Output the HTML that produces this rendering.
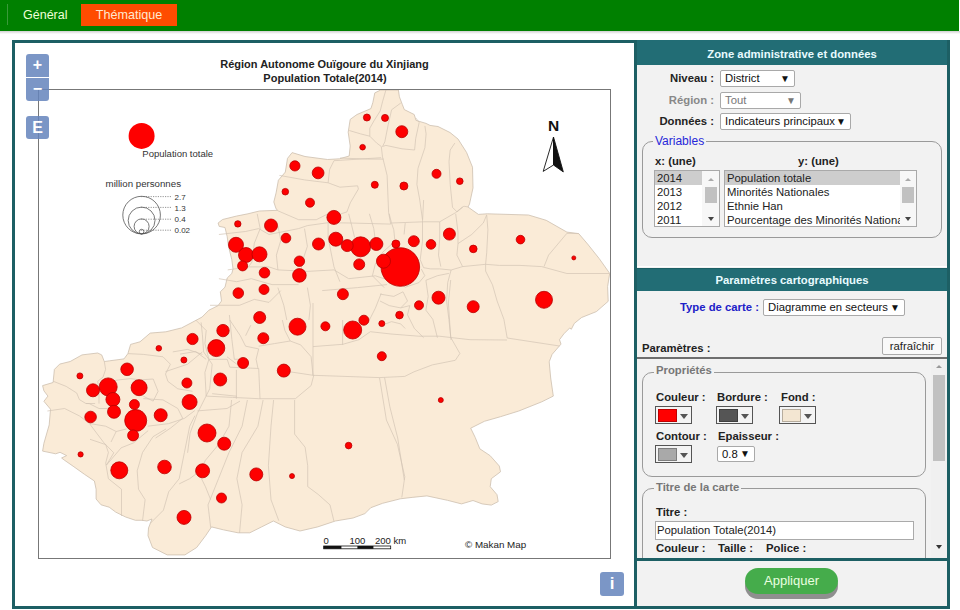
<!DOCTYPE html>
<html><head><meta charset="utf-8">
<style>
*{box-sizing:border-box}
html,body{margin:0;padding:0;width:960px;height:610px;overflow:hidden;background:#fff;font-family:"Liberation Sans",sans-serif;font-size:11.3px;color:#222}
.a{position:absolute}
#topbar{left:0;top:0;width:959px;height:31px;background:#008000}
#topsh{left:0;top:31px;width:960px;height:3px;background:linear-gradient(#d0d0d0,#fff)}
#sep{left:7px;top:4px;width:1px;height:21px;background:#3a9a3a}
#t1{left:23px;top:8px;font-size:12.5px;color:#efffd8}
#t2{left:81px;top:4px;width:96px;height:22px;background:#ff4c00;color:#ffe8d0;font-size:12.6px;text-align:center;line-height:22px}
#frame{left:12px;top:40px;width:938px;height:569px;border:3px solid #1d5f64}
#zplus,#zminus,#ze,#zi{background:rgba(100,132,188,0.85);color:#fff;font-weight:bold;text-align:center;border-radius:3px}
#zplus{left:26px;top:54px;width:23px;height:23px;font-size:16px;line-height:22px;border-radius:3px 3px 0 0}
#zminus{left:26px;top:78px;width:23px;height:23px;font-size:16px;line-height:21px;border-radius:0 0 3px 3px}
#ze{left:26px;top:116px;width:23px;height:23px;font-size:16px;line-height:23px}
#zi{left:600px;top:572px;width:24px;height:24px;font-size:17px;line-height:24px}
#mapbox{left:38px;top:89px;width:573px;height:470px;border:1px solid #777}
#panel{left:634px;top:40px;width:316px;height:569px;background:#f2f2f2;border:3px solid #1d5f64}
.hdr{background:#226d75;color:#e8fbff;font-weight:bold;text-align:center}
.lbl{font-weight:bold;color:#222;white-space:nowrap}
.sel{background:#fff;border:1px solid #a9a9a9;border-radius:2px;padding-left:4px;line-height:15px;color:#111;white-space:nowrap;overflow:hidden}
.sel i{position:absolute;right:4px;top:0;font-style:normal;font-size:10px}
.fs{border:1px solid #9a9a9a;border-radius:10px}
.leg{background:#f2f2f2;padding:0 2px;white-space:nowrap}
.lst{background:#fff;border:1px solid #a9a9a9;overflow:hidden}
.lst div{height:14px;line-height:14px;padding-left:2px;white-space:nowrap}
.sb{background:#f0f0f0}
.up,.dn{position:absolute;left:0;width:100%;text-align:center;font-size:7px;color:#777}
.tu{position:absolute;width:0;height:0;border-left:3.5px solid transparent;border-right:3.5px solid transparent;border-bottom:3.5px solid #aaa}
.td{position:absolute;width:0;height:0;border-left:3.5px solid transparent;border-right:3.5px solid transparent;border-top:4px solid #444}
.cp{background:#f4f4f4;border:1px solid #555}
.cp b{position:absolute;left:2px;top:2px;width:19px;height:13px;border:1px solid rgba(0,0,0,0.25)}
.cp i{position:absolute;left:24px;top:7px;width:0;height:0;border-left:4.5px solid transparent;border-right:4.5px solid transparent;border-top:5px solid #555}
</style></head>
<body>
<div id="topbar" class="a"></div>
<div id="topsh" class="a"></div>
<div id="sep" class="a"></div>
<div id="t1" class="a">Général</div>
<div id="t2" class="a">Thématique</div>
<div id="frame" class="a"></div>
<div id="mapbox" class="a"></div>
<svg class="a" style="left:0;top:0" width="960" height="610" viewBox="0 0 960 610">
<defs><clipPath id="mc"><rect x="39" y="90" width="571" height="468"/></clipPath></defs>
<g clip-path="url(#mc)">
<polygon points="374.8,92.9 380.7,90.0 398.4,90.0 399.4,96.8 402.4,104.7 404.3,109.6 414.2,114.5 416.0,120.4 426.0,123.4 430.0,125.4 438.0,126.5 450.0,132.5 458.0,139.0 466.6,152.5 472.5,167.2 473.0,187.9 469.5,204.1 468.0,207.0 478.4,214.4 487.2,213.8 528.5,215.0 546.2,220.3 566.9,232.1 578.7,233.6 587.5,243.9 599.3,258.7 609.7,273.4 607.6,286.6 608.2,301.3 596.4,311.6 581.6,317.5 574.3,323.4 571.3,329.3 569.8,327.9 563.9,333.8 559.5,339.7 561.0,344.1 552.1,354.4 549.2,361.8 550.7,378.0 553.3,396.1 541.8,401.8 518.8,411.0 500.5,416.7 484.4,421.3 470.7,428.2 475.2,437.4 479.8,448.8 490.2,455.7 499.3,466.0 500.5,471.8 491.3,478.7 490.2,486.7 497.0,494.7 498.2,501.6 491.3,505.1 482.1,503.9 473.0,500.5 461.5,503.9 447.5,500.3 426.9,495.9 412.1,497.4 400.3,498.8 382.6,503.3 370.8,507.7 364.9,513.6 353.1,518.0 335.4,521.0 317.7,526.9 300.0,531.0 285.2,526.9 273.4,521.0 261.6,526.9 249.8,532.8 238.0,532.8 223.3,529.8 211.5,526.9 205.6,535.7 196.7,547.5 184.9,554.9 167.2,554.9 152.5,547.5 148.0,535.7 148.5,528.0 152.0,519.0 146.9,521.0 142.0,520.3 135.4,520.3 125.6,517.0 115.7,512.1 109.2,507.2 101.0,504.8 96.1,499.0 96.1,489.2 94.4,481.0 84.6,474.4 73.1,466.2 64.9,460.5 61.6,458.0 66.6,455.6 60.0,452.3 55.7,453.8 42.6,451.1 43.9,443.3 49.2,424.9 50.5,409.2 43.9,401.3 47.9,396.1 43.9,390.8 42.6,385.6 53.1,382.5 54.4,369.4 59.7,364.1 70.2,361.5 82.0,354.9 97.7,353.0 101.7,354.9 104.3,361.5 109.6,360.8 124.0,358.9 127.9,353.6 130.6,344.4 140.0,341.8 150.2,333.1 165.9,331.8 181.6,327.9 190.0,323.5 202.0,317.1 208.9,310.2 218.1,305.6 221.5,301.0 220.3,291.8 225.0,287.2 227.2,278.0 231.8,273.5 233.0,268.9 231.8,259.7 228.4,245.9 227.2,236.7 225.0,227.5 219.2,226.4 218.1,223.0 222.6,219.5 236.4,216.1 247.9,213.8 259.4,211.0 277.7,210.3 276.1,208.9 273.8,202.0 276.1,192.8 278.4,180.2 285.3,172.1 287.5,158.4 292.1,152.6 305.0,156.5 327.6,159.5 339.4,158.8 349.2,156.0 350.2,146.0 348.2,132.2 350.2,119.4 357.0,114.5 370.9,108.6 372.8,102.7" fill="#faebd7" stroke="#cdbfae" stroke-width="0.8"/>
<polyline points="385.9,90.0 382.5,101.8 380.2,111.0 374.4,120.1 369.8,128.2 369.8,136.2 376.7,143.1 381.3,146.5 382.5,156.9 384.8,166.0 387.1,175.4 388.6,212.3 390.7,224.1" fill="none" stroke="#d2c4b4" stroke-width="0.7"/>
<polyline points="349.2,130.5 360.7,133.9 369.8,136.2" fill="none" stroke="#d2c4b4" stroke-width="0.7"/>
<polyline points="400.8,103.0 391.6,109.8 388.2,124.7 384.8,141.9 382.5,146.5" fill="none" stroke="#d2c4b4" stroke-width="0.7"/>
<polyline points="415.7,117.8 419.2,122.4 415.7,138.5 414.6,150.0 402.0,148.8 385.9,145.4 382.5,146.5" fill="none" stroke="#d2c4b4" stroke-width="0.7"/>
<polyline points="424.9,125.9 426.1,133.9 424.9,147.7 418.0,168.3 416.9,184.4 419.6,199.0 422.5,219.7" fill="none" stroke="#d2c4b4" stroke-width="0.7"/>
<polyline points="454.8,143.1 450.2,150.0 449.0,161.4 450.2,184.4 452.5,207.3 457.0,211.9 463.9,206.2 468.0,207.0" fill="none" stroke="#d2c4b4" stroke-width="0.7"/>
<polyline points="340.0,158.0 367.5,159.1 383.6,159.1" fill="none" stroke="#d2c4b4" stroke-width="0.7"/>
<polyline points="334.0,160.7 381.2,157.7" fill="none" stroke="#d2c4b4" stroke-width="0.7"/>
<polyline points="334.0,160.7 329.6,169.5 328.1,182.8" fill="none" stroke="#d2c4b4" stroke-width="0.7"/>
<polyline points="279.4,175.4 304.5,179.9 328.1,182.8 339.9,187.2 357.6,185.8" fill="none" stroke="#d2c4b4" stroke-width="0.7"/>
<polyline points="277.9,210.8 298.6,219.7 316.3,219.7 328.1,213.8 340.0,214.2 346.9,211.9 350.3,202.8 358.4,189.0 357.6,185.8" fill="none" stroke="#d2c4b4" stroke-width="0.7"/>
<polyline points="389.2,213.8 391.5,223.0 423.6,221.8 439.7,221.8 455.7,212.6 462.6,206.9" fill="none" stroke="#d2c4b4" stroke-width="0.7"/>
<polyline points="455.7,213.8 458.0,232.1 458.0,243.6 456.9,255.1 462.6,266.6" fill="none" stroke="#d2c4b4" stroke-width="0.7"/>
<polyline points="218.9,234.5 245.4,231.5 258.7,228.6 269.0,234.5 298.6,228.6 307.4,225.6 328.1,222.7 350.0,223.0 390.7,224.1" fill="none" stroke="#d2c4b4" stroke-width="0.7"/>
<polyline points="257.2,213.8 260.2,228.6 254.3,243.3 252.0,262.0 248.4,266.9" fill="none" stroke="#d2c4b4" stroke-width="0.7"/>
<polyline points="277.9,225.6 280.8,240.4 276.4,255.1 277.9,269.9" fill="none" stroke="#d2c4b4" stroke-width="0.7"/>
<polyline points="304.5,228.6 307.4,246.3 301.5,264.0 301.5,281.7" fill="none" stroke="#d2c4b4" stroke-width="0.7"/>
<polyline points="328.1,222.7 328.1,237.4 331.0,252.2 334.0,266.9 339.9,281.7" fill="none" stroke="#d2c4b4" stroke-width="0.7"/>
<polyline points="348.7,213.8 351.7,225.6 354.6,237.4" fill="none" stroke="#d2c4b4" stroke-width="0.7"/>
<polyline points="369.4,213.8 373.8,228.6 375.3,240.4" fill="none" stroke="#d2c4b4" stroke-width="0.7"/>
<polyline points="391.5,223.0 393.8,229.8 394.9,241.3 382.7,252.2 375.3,264.0 372.4,275.8 384.2,287.6" fill="none" stroke="#d2c4b4" stroke-width="0.7"/>
<polyline points="405.2,223.0 404.1,234.4" fill="none" stroke="#d2c4b4" stroke-width="0.7"/>
<polyline points="277.9,269.9 307.4,271.4 334.0,269.9 348.7,278.7 375.3,275.8 401.9,284.6 405.2,287.2 419.0,282.6 424.8,275.7 421.3,268.9" fill="none" stroke="#d2c4b4" stroke-width="0.7"/>
<polyline points="423.6,267.7 430.5,268.9 439.7,268.9 451.1,270.0 462.6,266.6 485.6,264.3 499.3,265.4 520.0,265.4" fill="none" stroke="#d2c4b4" stroke-width="0.7"/>
<polyline points="425.9,280.3 437.4,275.7 448.9,273.4" fill="none" stroke="#d2c4b4" stroke-width="0.7"/>
<polyline points="425.9,280.3 428.2,296.4 425.9,310.2 432.8,319.3 437.4,337.7" fill="none" stroke="#d2c4b4" stroke-width="0.7"/>
<polyline points="380.0,294.1 393.8,296.4 403.0,291.8" fill="none" stroke="#d2c4b4" stroke-width="0.7"/>
<polyline points="380.0,301.0 389.2,305.6 400.7,307.9 409.8,305.6 407.5,314.8 414.4,328.5 423.6,337.7" fill="none" stroke="#d2c4b4" stroke-width="0.7"/>
<polyline points="380.0,326.2 391.5,321.6 400.7,323.9 405.2,328.5" fill="none" stroke="#d2c4b4" stroke-width="0.7"/>
<polyline points="403.0,291.8 407.5,301.0 400.7,307.9" fill="none" stroke="#d2c4b4" stroke-width="0.7"/>
<polyline points="227.7,269.9 248.4,266.9 269.0,266.9 277.9,269.9" fill="none" stroke="#d2c4b4" stroke-width="0.7"/>
<polyline points="218.9,278.7 236.6,281.7 251.3,278.7 272.0,284.6 298.6,284.6" fill="none" stroke="#d2c4b4" stroke-width="0.7"/>
<polyline points="210.0,305.3 239.5,305.3 254.3,299.4 269.0,302.4 280.8,290.6" fill="none" stroke="#d2c4b4" stroke-width="0.7"/>
<polyline points="277.9,287.6 283.8,305.3 286.8,320.0" fill="none" stroke="#d2c4b4" stroke-width="0.7"/>
<polyline points="307.4,287.6 310.4,305.3 308.9,320.0" fill="none" stroke="#d2c4b4" stroke-width="0.7"/>
<polyline points="322.2,290.6 357.6,287.6 387.1,284.6" fill="none" stroke="#d2c4b4" stroke-width="0.7"/>
<polyline points="381.2,293.5 375.3,308.3 369.4,320.0" fill="none" stroke="#d2c4b4" stroke-width="0.7"/>
<polyline points="423.6,200.0 422.5,221.8 422.5,241.3 420.2,259.7 423.6,267.7" fill="none" stroke="#d2c4b4" stroke-width="0.7"/>
<polyline points="439.7,221.8 439.7,239.0 438.5,255.1 440.8,266.6" fill="none" stroke="#d2c4b4" stroke-width="0.7"/>
<polyline points="458.0,243.6 471.8,234.4 483.3,223.0 486.7,214.9" fill="none" stroke="#d2c4b4" stroke-width="0.7"/>
<polyline points="486.7,214.9 487.9,229.8 486.7,252.8 485.6,264.3" fill="none" stroke="#d2c4b4" stroke-width="0.7"/>
<polyline points="520.0,265.4 541.7,266.6 566.9,273.5 609.7,273.5" fill="none" stroke="#d2c4b4" stroke-width="0.7"/>
<polyline points="578.7,233.6 566.9,233.3 548.6,255.1 544.0,266.6" fill="none" stroke="#d2c4b4" stroke-width="0.7"/>
<polyline points="485.6,264.3 485.6,271.1 492.5,284.9 497.1,301.0 503.9,319.3 507.2,338.0 559.5,346.0" fill="none" stroke="#d2c4b4" stroke-width="0.7"/>
<polyline points="451.1,270.0 447.7,282.6 446.6,301.0 448.9,319.3 451.1,340.0" fill="none" stroke="#d2c4b4" stroke-width="0.7"/>
<polyline points="450.7,280.0 448.4,303.0 450.7,337.4 459.9,353.5 455.3,360.3 432.3,364.9 414.0,371.8 404.8,376.4 379.5,377.6 313.0,375.3 290.0,371.8" fill="none" stroke="#d2c4b4" stroke-width="0.7"/>
<polyline points="313.0,346.6 342.8,344.3 358.9,339.7 370.3,331.7 391.0,334.0 418.6,336.2 439.2,336.2 470.0,339.7 507.0,340.0" fill="none" stroke="#d2c4b4" stroke-width="0.7"/>
<polyline points="313.0,303.0 313.0,375.3" fill="none" stroke="#d2c4b4" stroke-width="0.7"/>
<polyline points="379.5,377.6 386.4,420.0 397.4,444.3 404.8,476.7 401.8,497.4" fill="none" stroke="#d2c4b4" stroke-width="0.7"/>
<polyline points="85.9,403.5 89.2,403.6 99.0,408.5 113.8,408.5 121.2,413.4" fill="none" stroke="#d2c4b4" stroke-width="0.7"/>
<polyline points="47.4,411.0 64.6,408.5 79.4,415.9 89.2,423.2 96.6,433.1 104.0,442.9 113.8,452.8 106.4,465.1" fill="none" stroke="#d2c4b4" stroke-width="0.7"/>
<polyline points="104.3,361.5 105.6,369.4 103.0,377.2 97.7,381.2 99.0,392.0 99.0,403.6" fill="none" stroke="#d2c4b4" stroke-width="0.7"/>
<polyline points="53.1,381.2 66.2,386.4 76.7,393.0 79.4,399.6 85.9,403.5 95.1,403.5" fill="none" stroke="#d2c4b4" stroke-width="0.7"/>
<polyline points="127.9,353.6 143.3,354.4 163.0,356.8 170.4,364.2 165.5,374.0 167.9,381.4 177.8,388.8 192.5,391.3" fill="none" stroke="#d2c4b4" stroke-width="0.7"/>
<polyline points="165.5,371.6 187.6,364.2 202.4,351.9" fill="none" stroke="#d2c4b4" stroke-width="0.7"/>
<polyline points="201.1,322.4 202.4,334.7 203.6,351.9 212.2,364.2 209.7,388.8 197.4,413.4 190.1,433.1 187.6,452.8" fill="none" stroke="#d2c4b4" stroke-width="0.7"/>
<polyline points="112.0,381.0 118.7,379.9 130.6,378.6 140.0,379.9 153.2,379.0 158.1,391.3 153.2,401.1 143.3,396.2" fill="none" stroke="#d2c4b4" stroke-width="0.7"/>
<polyline points="143.3,398.6 163.0,399.9 177.8,408.5 182.7,418.3 170.4,428.2 155.6,438.0" fill="none" stroke="#d2c4b4" stroke-width="0.7"/>
<polyline points="148.2,430.6 133.5,442.9 121.2,447.8 106.4,465.1" fill="none" stroke="#d2c4b4" stroke-width="0.7"/>
<polyline points="229.4,315.0 231.9,339.6 234.3,359.3 240.0,359.3" fill="none" stroke="#d2c4b4" stroke-width="0.7"/>
<polyline points="197.4,410.9 227.0,408.5 240.0,401.1" fill="none" stroke="#d2c4b4" stroke-width="0.7"/>
<polyline points="212.2,393.7 236.8,396.2" fill="none" stroke="#d2c4b4" stroke-width="0.7"/>
<polyline points="227.0,356.8 236.8,364.2" fill="none" stroke="#d2c4b4" stroke-width="0.7"/>
<polyline points="172.8,351.9 187.6,349.4 202.4,354.4" fill="none" stroke="#d2c4b4" stroke-width="0.7"/>
<polyline points="90.0,439.3 105.7,444.6 108.4,452.5 105.7,463.0 108.4,478.7 121.5,489.2 121.5,516.0" fill="none" stroke="#d2c4b4" stroke-width="0.7"/>
<polyline points="116.2,431.5 111.0,442.0" fill="none" stroke="#d2c4b4" stroke-width="0.7"/>
<polyline points="166.1,428.9 153.0,436.7 142.5,452.5 137.2,470.8 138.5,489.2 145.1,499.7 142.5,521.0" fill="none" stroke="#d2c4b4" stroke-width="0.7"/>
<polyline points="194.9,415.7 189.7,426.2 184.4,452.5 179.2,478.7 168.7,491.8 163.4,510.2 150.3,523.3" fill="none" stroke="#d2c4b4" stroke-width="0.7"/>
<polyline points="231.6,400.0 229.0,426.2 218.5,444.6 205.4,460.3 200.2,470.8 189.7,478.7 179.2,483.9" fill="none" stroke="#d2c4b4" stroke-width="0.7"/>
<polyline points="247.4,400.0 242.1,426.2 229.0,452.5 218.5,478.7 208.0,504.9 210.7,527.5" fill="none" stroke="#d2c4b4" stroke-width="0.7"/>
<polyline points="200.2,476.1 205.4,486.6 210.7,499.7" fill="none" stroke="#d2c4b4" stroke-width="0.7"/>
<polyline points="263.1,400.0 257.9,426.2 242.1,452.5 236.9,478.7 242.1,504.9 239.5,533.0" fill="none" stroke="#d2c4b4" stroke-width="0.7"/>
<polyline points="273.6,400.0 271.0,426.2 268.4,465.6 271.0,499.7 278.8,520.7" fill="none" stroke="#d2c4b4" stroke-width="0.7"/>
<polyline points="294.6,400.0 294.6,434.1 305.1,447.2 307.7,465.6 307.7,486.6 318.2,494.4 330.0,504.9 333.9,521.0" fill="none" stroke="#d2c4b4" stroke-width="0.7"/>
<polyline points="90.0,423.6 105.7,426.2 116.2,431.5 126.7,428.9" fill="none" stroke="#d2c4b4" stroke-width="0.7"/>
<polyline points="147.7,426.2 168.7,423.6 184.4,418.4 194.9,410.5" fill="none" stroke="#d2c4b4" stroke-width="0.7"/>
<polyline points="206.2,396.1 232.5,397.4 258.7,398.7 295.4,398.7 311.1,385.6 313.8,375.1" fill="none" stroke="#d2c4b4" stroke-width="0.7"/>
<polyline points="206.2,396.1 204.9,372.5 208.9,359.3 227.2,359.3 229.8,367.2 258.7,368.5 260.0,398.7" fill="none" stroke="#d2c4b4" stroke-width="0.7"/>
<polyline points="236.4,369.8 236.4,398.7" fill="none" stroke="#d2c4b4" stroke-width="0.7"/>
<polyline points="258.7,348.9 256.1,359.3 258.0,368.5" fill="none" stroke="#d2c4b4" stroke-width="0.7"/>
<polyline points="258.7,346.2 274.4,343.6 290.2,341.0 300.7,344.9 311.1,356.7 313.0,375.1" fill="none" stroke="#d2c4b4" stroke-width="0.7"/>
<polyline points="384.6,377.7 389.8,406.6 397.7,438.0 404.3,480.0" fill="none" stroke="#d2c4b4" stroke-width="0.7"/>
<polyline points="195.7,320.0 206.2,330.5 204.9,343.6 208.9,359.3" fill="none" stroke="#d2c4b4" stroke-width="0.7"/>
<polyline points="229.8,320.0 240.3,335.7 245.6,346.2 258.7,348.9" fill="none" stroke="#d2c4b4" stroke-width="0.7"/>
<polyline points="180.0,354.1 195.7,351.5 206.2,359.3" fill="none" stroke="#d2c4b4" stroke-width="0.7"/>
<polyline points="250.8,325.2 245.6,335.7" fill="none" stroke="#d2c4b4" stroke-width="0.7"/>
<polyline points="282.3,320.0 284.9,330.5 290.2,341.0" fill="none" stroke="#d2c4b4" stroke-width="0.7"/>
<polyline points="342.6,320.0 342.6,344.9" fill="none" stroke="#d2c4b4" stroke-width="0.7"/>
<circle cx="400.3" cy="267" r="19.3" fill="#fe0000" stroke="#b80000" stroke-width="0.8"/>
<circle cx="135.7" cy="420.5" r="11" fill="#fe0000" stroke="#b80000" stroke-width="0.8"/>
<circle cx="360.6" cy="246.8" r="10" fill="#fe0000" stroke="#b80000" stroke-width="0.8"/>
<circle cx="352.7" cy="330" r="9" fill="#fe0000" stroke="#b80000" stroke-width="0.8"/>
<circle cx="108.2" cy="386.9" r="9" fill="#fe0000" stroke="#b80000" stroke-width="0.8"/>
<circle cx="207" cy="433" r="9" fill="#fe0000" stroke="#b80000" stroke-width="0.8"/>
<circle cx="544" cy="299.8" r="8.5" fill="#fe0000" stroke="#b80000" stroke-width="0.8"/>
<circle cx="297.5" cy="326.7" r="8.5" fill="#fe0000" stroke="#b80000" stroke-width="0.8"/>
<circle cx="216.3" cy="348.1" r="8.5" fill="#fe0000" stroke="#b80000" stroke-width="0.8"/>
<circle cx="119.3" cy="470.3" r="8.5" fill="#fe0000" stroke="#b80000" stroke-width="0.8"/>
<circle cx="139.1" cy="387.7" r="8" fill="#fe0000" stroke="#b80000" stroke-width="0.8"/>
<circle cx="236" cy="244.8" r="7.5" fill="#fe0000" stroke="#b80000" stroke-width="0.8"/>
<circle cx="246" cy="255" r="7.5" fill="#fe0000" stroke="#b80000" stroke-width="0.8"/>
<circle cx="259.5" cy="254.3" r="7.5" fill="#fe0000" stroke="#b80000" stroke-width="0.8"/>
<circle cx="189.6" cy="402" r="7.5" fill="#fe0000" stroke="#b80000" stroke-width="0.8"/>
<circle cx="333.9" cy="217.4" r="7" fill="#fe0000" stroke="#b80000" stroke-width="0.8"/>
<circle cx="335.8" cy="239.2" r="7" fill="#fe0000" stroke="#b80000" stroke-width="0.8"/>
<circle cx="383.5" cy="261.2" r="7" fill="#fe0000" stroke="#b80000" stroke-width="0.8"/>
<circle cx="112.9" cy="399.5" r="7" fill="#fe0000" stroke="#b80000" stroke-width="0.8"/>
<circle cx="202.6" cy="470.8" r="7" fill="#fe0000" stroke="#b80000" stroke-width="0.8"/>
<circle cx="184" cy="517.4" r="7" fill="#fe0000" stroke="#b80000" stroke-width="0.8"/>
<circle cx="299.4" cy="275.4" r="6.8" fill="#fe0000" stroke="#b80000" stroke-width="0.8"/>
<circle cx="164.5" cy="467" r="6.8" fill="#fe0000" stroke="#b80000" stroke-width="0.8"/>
<circle cx="438.5" cy="297.7" r="6.5" fill="#fe0000" stroke="#b80000" stroke-width="0.8"/>
<circle cx="271" cy="225.5" r="6.5" fill="#fe0000" stroke="#b80000" stroke-width="0.8"/>
<circle cx="376.4" cy="244" r="6.5" fill="#fe0000" stroke="#b80000" stroke-width="0.8"/>
<circle cx="283.8" cy="370.6" r="6.5" fill="#fe0000" stroke="#b80000" stroke-width="0.8"/>
<circle cx="220.2" cy="379.5" r="6.5" fill="#fe0000" stroke="#b80000" stroke-width="0.8"/>
<circle cx="93" cy="390.3" r="6.5" fill="#fe0000" stroke="#b80000" stroke-width="0.8"/>
<circle cx="114" cy="411.8" r="6.5" fill="#fe0000" stroke="#b80000" stroke-width="0.8"/>
<circle cx="160.7" cy="415.2" r="6.5" fill="#fe0000" stroke="#b80000" stroke-width="0.8"/>
<circle cx="224.2" cy="443.7" r="6.5" fill="#fe0000" stroke="#b80000" stroke-width="0.8"/>
<circle cx="256.3" cy="474.4" r="6.5" fill="#fe0000" stroke="#b80000" stroke-width="0.8"/>
<circle cx="127.1" cy="369.3" r="6.3" fill="#fe0000" stroke="#b80000" stroke-width="0.8"/>
<circle cx="223" cy="330.6" r="6.2" fill="#fe0000" stroke="#b80000" stroke-width="0.8"/>
<circle cx="401.8" cy="131.7" r="6" fill="#fe0000" stroke="#b80000" stroke-width="0.8"/>
<circle cx="449.4" cy="234.1" r="6" fill="#fe0000" stroke="#b80000" stroke-width="0.8"/>
<circle cx="473.2" cy="306.7" r="6" fill="#fe0000" stroke="#b80000" stroke-width="0.8"/>
<circle cx="318.5" cy="244" r="6" fill="#fe0000" stroke="#b80000" stroke-width="0.8"/>
<circle cx="347.2" cy="245.6" r="6" fill="#fe0000" stroke="#b80000" stroke-width="0.8"/>
<circle cx="259.7" cy="317.5" r="6" fill="#fe0000" stroke="#b80000" stroke-width="0.8"/>
<circle cx="318.1" cy="172.9" r="5.9" fill="#fe0000" stroke="#b80000" stroke-width="0.8"/>
<circle cx="90.6" cy="417" r="5.8" fill="#fe0000" stroke="#b80000" stroke-width="0.8"/>
<circle cx="192.5" cy="339" r="5.6" fill="#fe0000" stroke="#b80000" stroke-width="0.8"/>
<circle cx="413.8" cy="241.2" r="5.5" fill="#fe0000" stroke="#b80000" stroke-width="0.8"/>
<circle cx="359.2" cy="264.4" r="5.5" fill="#fe0000" stroke="#b80000" stroke-width="0.8"/>
<circle cx="342.9" cy="294.2" r="5.5" fill="#fe0000" stroke="#b80000" stroke-width="0.8"/>
<circle cx="263.3" cy="338.2" r="5.5" fill="#fe0000" stroke="#b80000" stroke-width="0.8"/>
<circle cx="243.1" cy="363" r="5.5" fill="#fe0000" stroke="#b80000" stroke-width="0.8"/>
<circle cx="133.1" cy="435.4" r="5.5" fill="#fe0000" stroke="#b80000" stroke-width="0.8"/>
<circle cx="264.5" cy="272.7" r="5.3" fill="#fe0000" stroke="#b80000" stroke-width="0.8"/>
<circle cx="238.3" cy="293.1" r="5.3" fill="#fe0000" stroke="#b80000" stroke-width="0.8"/>
<circle cx="299.4" cy="261.2" r="5.2" fill="#fe0000" stroke="#b80000" stroke-width="0.8"/>
<circle cx="294.9" cy="165.9" r="5.1" fill="#fe0000" stroke="#b80000" stroke-width="0.8"/>
<circle cx="242.6" cy="265.9" r="5" fill="#fe0000" stroke="#b80000" stroke-width="0.8"/>
<circle cx="264" cy="289.5" r="5" fill="#fe0000" stroke="#b80000" stroke-width="0.8"/>
<circle cx="363.9" cy="320.2" r="5" fill="#fe0000" stroke="#b80000" stroke-width="0.8"/>
<circle cx="186.9" cy="383" r="5" fill="#fe0000" stroke="#b80000" stroke-width="0.8"/>
<circle cx="134.4" cy="404.5" r="5" fill="#fe0000" stroke="#b80000" stroke-width="0.8"/>
<circle cx="221.5" cy="498" r="5" fill="#fe0000" stroke="#b80000" stroke-width="0.8"/>
<circle cx="431" cy="244.4" r="4.8" fill="#fe0000" stroke="#b80000" stroke-width="0.8"/>
<circle cx="286" cy="238.1" r="4.8" fill="#fe0000" stroke="#b80000" stroke-width="0.8"/>
<circle cx="310" cy="202.7" r="4.5" fill="#fe0000" stroke="#b80000" stroke-width="0.8"/>
<circle cx="436.5" cy="173.8" r="4.5" fill="#fe0000" stroke="#b80000" stroke-width="0.8"/>
<circle cx="325.4" cy="326.3" r="4.5" fill="#fe0000" stroke="#b80000" stroke-width="0.8"/>
<circle cx="419" cy="305.3" r="4.5" fill="#fe0000" stroke="#b80000" stroke-width="0.8"/>
<circle cx="381.8" cy="356.2" r="4.5" fill="#fe0000" stroke="#b80000" stroke-width="0.8"/>
<circle cx="520.5" cy="239.6" r="4.3" fill="#fe0000" stroke="#b80000" stroke-width="0.8"/>
<circle cx="403.9" cy="186" r="4" fill="#fe0000" stroke="#b80000" stroke-width="0.8"/>
<circle cx="395.9" cy="244" r="4" fill="#fe0000" stroke="#b80000" stroke-width="0.8"/>
<circle cx="473.3" cy="248.9" r="3.8" fill="#fe0000" stroke="#b80000" stroke-width="0.8"/>
<circle cx="399.5" cy="315.1" r="3.8" fill="#fe0000" stroke="#b80000" stroke-width="0.8"/>
<circle cx="366.9" cy="117.5" r="3.5" fill="#fe0000" stroke="#b80000" stroke-width="0.8"/>
<circle cx="385" cy="117.9" r="3.5" fill="#fe0000" stroke="#b80000" stroke-width="0.8"/>
<circle cx="374.8" cy="184.8" r="3.5" fill="#fe0000" stroke="#b80000" stroke-width="0.8"/>
<circle cx="285.3" cy="191.7" r="3.3" fill="#fe0000" stroke="#b80000" stroke-width="0.8"/>
<circle cx="459.8" cy="181.2" r="3.3" fill="#fe0000" stroke="#b80000" stroke-width="0.8"/>
<circle cx="348.6" cy="445.6" r="3.3" fill="#fe0000" stroke="#b80000" stroke-width="0.8"/>
<circle cx="237.8" cy="223.9" r="3.2" fill="#fe0000" stroke="#b80000" stroke-width="0.8"/>
<circle cx="381.8" cy="323.6" r="3" fill="#fe0000" stroke="#b80000" stroke-width="0.8"/>
<circle cx="183.9" cy="360" r="3" fill="#fe0000" stroke="#b80000" stroke-width="0.8"/>
<circle cx="79.9" cy="375.9" r="3" fill="#fe0000" stroke="#b80000" stroke-width="0.8"/>
<circle cx="362.6" cy="147.2" r="2.8" fill="#fe0000" stroke="#b80000" stroke-width="0.8"/>
<circle cx="158.8" cy="348.3" r="2.8" fill="#fe0000" stroke="#b80000" stroke-width="0.8"/>
<circle cx="80.6" cy="454.4" r="2.6" fill="#fe0000" stroke="#b80000" stroke-width="0.8"/>
<circle cx="440.8" cy="400.1" r="2.5" fill="#fe0000" stroke="#b80000" stroke-width="0.8"/>
<circle cx="292" cy="476.1" r="2.5" fill="#fe0000" stroke="#b80000" stroke-width="0.8"/>
<circle cx="573.8" cy="257.9" r="2" fill="#fe0000" stroke="#b80000" stroke-width="0.8"/>
</g>

<g font-family="Liberation Sans" fill="#222">
<text x="324.5" y="68.3" font-size="11" font-weight="bold" text-anchor="middle">Région Autonome Ouïgoure du Xinjiang</text>
<text x="325" y="82.3" font-size="11" font-weight="bold" text-anchor="middle">Population Totale(2014)</text>
<circle cx="141.6" cy="135.9" r="13" fill="#fe0000"/>
<text x="142.3" y="156.8" font-size="9.5" fill="#333">Population totale</text>
<text x="105.6" y="186.8" font-size="9.7" fill="#333">million personnes</text>
<g fill="none" stroke="#555" stroke-width="0.8">
<circle cx="141.6" cy="215.1" r="18.8"/><circle cx="141.6" cy="220.5" r="13.4"/><circle cx="141.6" cy="226.4" r="7.5"/><circle cx="141.6" cy="231.6" r="2.3"/>
</g>
<g stroke="#666" stroke-width="0.7" stroke-dasharray="1.2,1.2">
<line x1="141" y1="196.6" x2="171" y2="196.6"/><line x1="141" y1="207.4" x2="171" y2="207.4"/><line x1="141" y1="219.2" x2="171" y2="219.2"/><line x1="141" y1="230.2" x2="171" y2="230.2"/>
</g>
<g font-size="8" fill="#333"><text x="174.5" y="199.8">2.7</text><text x="174.5" y="210.6">1.3</text><text x="174.5" y="222.4">0.4</text><text x="174.5" y="233.4">0.02</text></g>
<text x="548" y="131.2" font-size="15.5" font-weight="bold" fill="#111">N</text>
<polygon points="553.5,137 543.2,171.4 553.5,165" fill="#fff" stroke="#111" stroke-width="0.9"/>
<polygon points="553.5,137 563.3,171.9 553.5,165" fill="#111" stroke="#111" stroke-width="0.9"/>
<g font-size="9.5" fill="#222"><text x="323.5" y="544.2">0</text><text x="349.4" y="544.2">100</text><text x="375" y="544.2">200 km</text></g>
<rect x="323.7" y="546" width="67" height="2.8" fill="#fff" stroke="#111" stroke-width="0.8"/>
<rect x="323.7" y="546" width="17.7" height="2.8" fill="#111"/><rect x="357.4" y="546" width="16" height="2.8" fill="#111"/>
<text x="465" y="547.9" font-size="9.8" fill="#222">© Makan Map</text>
</g>
</svg>
<div id="zplus" class="a">+</div>
<div id="zminus" class="a">&minus;</div>
<div id="ze" class="a">E</div>
<div id="zi" class="a">i</div>
<div id="panel" class="a"></div>
<!-- section 1 -->
<div class="a hdr" style="left:637px;top:40px;width:310px;height:25px;line-height:29px">Zone administrative et données</div>
<div class="a lbl" style="left:640px;top:72px;width:74px;text-align:right">Niveau :</div>
<div class="a sel" style="left:720px;top:70px;width:75px;height:17px">District<i>&#9660;</i></div>
<div class="a lbl" style="left:640px;top:94px;width:74px;text-align:right;color:#888">Région :</div>
<div class="a sel" style="left:720px;top:92px;width:81px;height:17px;color:#777">Tout<i style="color:#777">&#9660;</i></div>
<div class="a lbl" style="left:640px;top:115px;width:74px;text-align:right">Données :</div>
<div class="a sel" style="left:720px;top:113px;width:131px;height:17px">Indicateurs principaux<i>&#9660;</i></div>
<div class="a fs" style="left:642px;top:141px;width:300px;height:97px"></div>
<div class="a leg" style="left:653px;top:134px;color:#2626d9;font-size:12px">Variables</div>
<div class="a lbl" style="left:655px;top:155px">x: (une)</div>
<div class="a lbl" style="left:798px;top:155px">y: (une)</div>
<div class="a lst" style="left:654px;top:170px;width:66px;height:57px">
 <div style="background:#cdcdcd;width:47px">2014</div><div>2013</div><div>2012</div><div>2011</div>
 <div class="a" style="left:47px;top:0;width:17px;height:55px;background:#f7f7f7"><i class="tu" style="left:6px;top:7px"></i><div class="a" style="left:3px;top:16px;width:12px;height:15.5px;background:#c1c1c1"></div><i class="td" style="left:6px;top:45.5px"></i></div>
</div>
<div class="a lst" style="left:724px;top:170px;width:193px;height:57px">
 <div style="background:#cdcdcd;width:175px">Population totale</div><div>Minorités Nationales</div><div>Ethnie Han</div><div>Pourcentage des Minorités Nationales</div>
 <div class="a" style="left:175px;top:0;width:16px;height:55px;background:#f7f7f7"><i class="tu" style="left:4.5px;top:7px"></i><div class="a" style="left:2px;top:16px;width:12px;height:15.5px;background:#c1c1c1"></div><i class="td" style="left:4.5px;top:45.5px"></i></div>
</div>
<div class="a" style="left:637px;top:266px;width:310px;height:1px;background:#fff"></div>
<!-- section 2 -->
<div class="a hdr" style="left:637px;top:268px;width:310px;height:22.5px;line-height:23px;border-top:1px solid #1d5f64">Paramètres cartographiques</div>
<div class="a lbl" style="left:680px;top:301px;color:#2020c8">Type de carte :</div>
<div class="a sel" style="left:763px;top:299px;width:142px;height:17px">Diagramme en secteurs<i>&#9660;</i></div>
<div class="a lbl" style="left:642px;top:342px">Paramètres :</div>
<div class="a" style="left:882px;top:336.5px;width:60px;height:18px;background:#f9f9f9;border:1px solid #aaa;border-radius:2px;text-align:center;line-height:16px">rafraîchir</div>
<div class="a" style="left:637px;top:356.5px;width:310px;height:2px;background:#6e6e6e"></div>
<!-- scroll area -->
<div class="a" style="left:637px;top:359px;width:310px;height:199px;overflow:hidden">
 <div class="a fs" style="left:5px;top:13px;width:284px;height:105px"></div>
 <div class="a leg" style="left:17px;top:5px;color:#777;font-weight:bold">Propriétés</div>
 <div class="a lbl" style="left:19px;top:32px">Couleur :</div>
 <div class="a lbl" style="left:80px;top:32px">Bordure :</div>
 <div class="a lbl" style="left:144px;top:32px">Fond :</div>
 <div class="a cp" style="left:18px;top:47px;width:37px;height:18px"><b style="background:#ff0000"></b><i></i></div>
 <div class="a cp" style="left:79px;top:47px;width:37px;height:18px"><b style="background:#555"></b><i></i></div>
 <div class="a cp" style="left:142px;top:47px;width:37px;height:18px"><b style="background:#f3e6d2"></b><i></i></div>
 <div class="a lbl" style="left:19px;top:71px">Contour :</div>
 <div class="a lbl" style="left:81px;top:71px">Epaisseur :</div>
 <div class="a cp" style="left:18px;top:86px;width:37px;height:18px"><b style="background:#a9a9a9"></b><i></i></div>
 <div class="a sel" style="left:80px;top:87px;width:38px;height:16px;line-height:14px">0.8<i>&#9660;</i></div>
 <div class="a fs" style="left:5px;top:129px;width:284px;height:110px"></div>
 <div class="a leg" style="left:17px;top:122px;color:#777;font-weight:bold">Titre de la carte</div>
 <div class="a lbl" style="left:19px;top:147px">Titre :</div>
 <div class="a" style="left:18px;top:162px;width:259px;height:19px;background:#fff;border:1px solid #aaa;line-height:17px;padding-left:1px">Population Totale(2014)</div>
 <div class="a lbl" style="left:19px;top:183px">Couleur :</div>
 <div class="a lbl" style="left:81px;top:183px">Taille :</div>
 <div class="a lbl" style="left:129px;top:183px">Police :</div>
 <div class="a" style="left:294px;top:0;width:16px;height:199px;background:#f0f0f0">
  <i class="tu" style="left:5px;top:6px;border-left-width:3.5px;border-right-width:3.5px;border-bottom-width:3.5px;border-bottom-color:#999"></i>
  <div class="a" style="left:2px;top:16px;width:12px;height:86px;background:#c1c1c1"></div>
  <i class="td" style="left:4.5px;top:186px;border-left-width:3.8px;border-right-width:3.8px;border-top-width:4px;border-top-color:#333"></i>
 </div>
</div>
<div class="a" style="left:637px;top:558px;width:310px;height:2.5px;background:#1d5f64"></div>
<div class="a" style="left:745px;top:573px;width:93px;height:26px;border-radius:13px;background:#8f8f8f"></div>
<div class="a" style="left:745px;top:568px;width:93px;height:26px;border-radius:13px;background:#45ac4b;color:#eaffe0;font-size:13px;text-align:center;line-height:26px">Appliquer</div>
</body></html>
